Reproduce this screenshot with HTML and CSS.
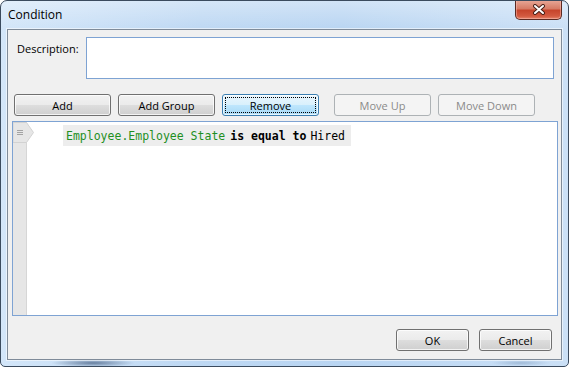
FILE: index.html
```html
<!DOCTYPE html>
<html>
<head>
  <link rel="stylesheet" href="styles.css">
</head>
<body>
  <div class="window">
    <div class="titlebar">
      <span class="title">Condition</span>
      <button class="close-button">
        <svg width="14" height="11" viewBox="0 0 14 11">
          <path d="M3 2 L11 9 M11 2 L3 9" stroke="#4a2018" stroke-width="4" stroke-linecap="round"/>
          <path d="M3 2 L11 9 M11 2 L3 9" stroke="#ffffff" stroke-width="2" stroke-linecap="round"/>
        </svg>
      </button>
    </div>

    <div class="frame">
      <div class="client">
        <div class="desc-row">
          <label class="desc-label" for="description">Description:</label>
          <textarea id="description" class="desc-input"></textarea>
        </div>

        <div class="toolbar">
          <button class="button">Add</button>
          <button class="button">Add Group</button>
          <button class="button default-button">Remove</button>
          <button class="button move-up" disabled>Move Up</button>
          <button class="button" disabled>Move Down</button>
        </div>

        <div class="editor">
          <div class="gutter">
            <svg class="gutter-arrow" width="22" height="22" viewBox="0 0 22 22">
              <polygon points="0,0.5 13.5,0.5 20.5,10.5 13.5,20.5 0,20.5" fill="#e6e6e6" stroke="#d2d2d2"/>
              <path d="M4 8.5 H10 M4 10.5 H10 M4 12.5 H10" stroke="#a3a3a3" stroke-width="1"/>
            </svg>
          </div>
          <div class="code">
            <div class="expression">
              <span class="field">Employee.Employee State</span>
              <span class="operator">is equal to</span>
              <span class="value">Hired</span>
            </div>
          </div>
        </div>

        <div class="footer">
          <button class="button small-button">OK</button>
          <button class="button small-button">Cancel</button>
        </div>
      </div>
    </div>
  </div>
</body>
</html>
```

FILE: styles.css
```css
:root {
  --frame-border: #3b4b5e;
  --client-border: #7f8b99;
  --input-border: #7ea3d3;
  --button-border: #707070;
  --text-primary: #000000;
  --text-disabled: #8a8a8a;
  --code-green: #1f8f1f;
}

* {
  box-sizing: border-box;
}

body {
  margin: 0;
  font-family: "Open Sans", "Noto Sans", sans-serif;
  font-size: 11px;
  color: var(--text-primary);
  background: #ffffff;
}

.window {
  width: 569px;
  height: 367px;
  display: flex;
  flex-direction: column;
  border: 1px solid var(--frame-border);
  border-radius: 7px 7px 5px 5px;
  overflow: hidden;
  background:
    radial-gradient(ellipse 42px 4px at 92px 362px, rgba(70, 95, 130, 0.75), rgba(70, 95, 130, 0)),
    radial-gradient(ellipse 30px 3px at 520px 362px, rgba(120, 150, 185, 0.5), rgba(120, 150, 185, 0)),
    linear-gradient(180deg, rgba(255, 255, 255, 0.35), rgba(255, 255, 255, 0) 28px),
    linear-gradient(90deg, #d3e6f9 0%, #bed8f3 35%, #b9d5f2 60%, #cbe0f6 100%);
}

.titlebar {
  height: 28px;
  display: flex;
  align-items: flex-start;
  flex-shrink: 0;
}

.title {
  padding: 6px 0 0 7px;
  font-size: 12px;
  line-height: 15px;
}

.close-button {
  margin: -1px 6px 0 auto;
  width: 47px;
  height: 20px;
  padding: 0;
  display: flex;
  align-items: center;
  justify-content: center;
  border: 1px solid #5b2a22;
  border-top: none;
  border-radius: 0 0 5px 5px;
  background: linear-gradient(180deg, #e9a999 0%, #d77c66 45%, #c7452c 55%, #d35a40 85%, #e6866c 100%);
  box-shadow: inset 0 0 0 1px rgba(255, 200, 190, 0.45);
}

.frame {
  flex: 1;
  display: flex;
  padding: 0 6px 6px 6px;
}

.client {
  flex: 1;
  display: flex;
  flex-direction: column;
  background: #f0f0f0;
  border: 1px solid var(--client-border);
  box-shadow: 0 0 0 1px rgba(255, 255, 255, 0.55);
}

.desc-row {
  display: flex;
  padding: 7px 7px 0 9px;
}

.desc-label {
  width: 69px;
  padding-top: 4px;
  line-height: 15px;
}

.desc-input {
  width: 468px;
  height: 42px;
  margin: 0;
  border: 1px solid var(--input-border);
  resize: none;
  background: #ffffff;
}

.toolbar {
  display: flex;
  gap: 7px;
  padding: 15px 0 0 6px;
}

.button {
  width: 97px;
  height: 22px;
  padding: 0;
  font-family: inherit;
  font-size: 11px;
  color: var(--text-primary);
  border: 1px solid var(--button-border);
  border-radius: 3px;
  background: linear-gradient(180deg, #f2f2f2 0%, #ebebeb 48%, #dddddd 52%, #cfcfcf 100%);
  box-shadow: inset 0 0 0 1px rgba(255, 255, 255, 0.75);
}

.default-button {
  border-color: #3c7fb1;
  background: linear-gradient(180deg, #eaf6fd 0%, #d9f0fc 48%, #bee6fd 52%, #a7d9f5 100%);
  outline: 1px dotted #000000;
  outline-offset: -4px;
}

.button:disabled {
  color: var(--text-disabled);
  border-color: #adb2b5;
  background: #f4f4f4;
  box-shadow: none;
}

.move-up {
  margin-left: 8px;
}

.editor {
  display: flex;
  height: 195px;
  margin: 5px 3px 0 4px;
  border: 1px solid var(--input-border);
  background: #ffffff;
}

.gutter {
  position: relative;
  width: 14px;
  background: #e6e6e6;
  border-right: 1px solid #d6d6d6;
}

.gutter-arrow {
  position: absolute;
  top: 0;
  left: 0;
}

.code {
  flex: 1;
  padding: 3px 0 0 36px;
}

.expression {
  display: inline-flex;
  align-items: center;
  gap: 4px;
  height: 21px;
  padding: 0 6px 0 3px;
  background: #ededed;
  font-family: "DejaVu Sans Mono", "Liberation Mono", monospace;
  font-size: 11.5px;
}

.field {
  color: var(--code-green);
  margin-right: 1px;
}

.operator {
  font-weight: bold;
}

.footer {
  display: flex;
  justify-content: flex-end;
  gap: 10px;
  padding: 13px 9px 0 0;
}

.small-button {
  width: 73px;
}
```
